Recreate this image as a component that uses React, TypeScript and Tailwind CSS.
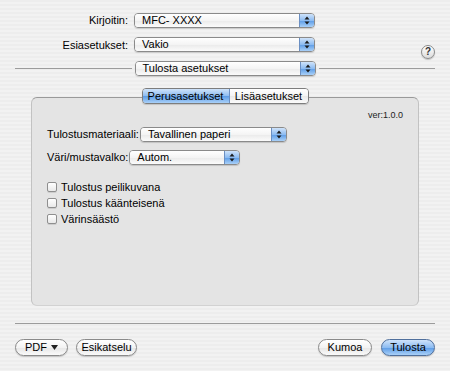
import type { ReactNode } from 'react'

const font = "font-['Liberation_Sans','DejaVu_Sans',sans-serif]"

function Arrows() {
  return (
    <svg width="6" height="9" viewBox="0 0 6 9" className="block">
      <path d="M3 0.5 L5.5 3.5 L0.5 3.5 Z" fill="#1a1a1a" />
      <path d="M3 8.5 L5.5 5.5 L0.5 5.5 Z" fill="#1a1a1a" />
    </svg>
  )
}

function Popup({ value, className }: { value: string; className: string }) {
  return (
    <div className={`flex h-[15px] items-stretch rounded-[4px] border border-[#8a8a8a] shadow-[0_1px_1px_rgba(0,0,0,0.15)] overflow-hidden ${className}`}>
      <div className="flex flex-1 items-center bg-[linear-gradient(#ffffff,#f4f4f4_50%,#eaeaea_51%,#fbfbfb)] pl-[7px] text-[11px] leading-none text-black">
        {value}
      </div>
      <div className="flex w-[15px] items-center justify-center border-l border-[#6b8fc2] bg-[linear-gradient(#cfe3fa,#8dbcf2_50%,#5b9be6_51%,#a9d0f8)]">
        <Arrows />
      </div>
    </div>
  )
}

function PushButton({ children, className, primary }: { children: ReactNode; className: string; primary?: boolean }) {
  return (
    <div
      className={`flex h-[17px] items-center justify-center rounded-full border text-[11px] leading-none text-black shadow-[0_1px_1px_rgba(0,0,0,0.18)] ${
        primary
          ? 'border-[#4f6f9c] bg-[linear-gradient(#cfe3fa,#8dbcf2_50%,#5b9be6_51%,#a9d0f8)]'
          : 'border-[#8a8a8a] bg-[linear-gradient(#ffffff,#f3f3f3_50%,#e6e6e6_51%,#fafafa)]'
      } ${className}`}
    >
      {children}
    </div>
  )
}

function Checkbox({ label }: { label: string }) {
  return (
    <div className="flex h-[16px] items-center gap-[4px]">
      <div className="h-[10px] w-[10px] rounded-[2px] border border-[#8f8f8f] bg-[linear-gradient(#ffffff,#e9e9e9)] shadow-[0_1px_0_rgba(0,0,0,0.1)]" />
      <span className="text-[11px] leading-none text-black">{label}</span>
    </div>
  )
}

export default function App() {
  return (
    <div
      className={`${font} flex h-[371px] w-[450px] flex-col overflow-hidden bg-[repeating-linear-gradient(180deg,#ededed_0px,#ededed_2px,#f2f2f2_2px,#f2f2f2_4px)] pt-[13px]`}
    >
      <div className="flex items-center">
        <span className="w-[128px] text-right text-[11px] leading-none text-black">Kirjoitin:</span>
        <Popup value="MFC- XXXX" className="ml-[6px] w-[181px]" />
      </div>

      <div className="mt-[9px] flex items-start">
        <span className="mt-[3px] w-[128px] text-right text-[11px] leading-none text-black">Esiasetukset:</span>
        <Popup value="Vakio" className="ml-[6px] w-[181px]" />
        <div className="mb-[-7px] ml-auto mr-[15px] mt-[8px] flex h-[14px] w-[14px] items-center justify-center rounded-full border border-[#8a8a8a] bg-[linear-gradient(#ffffff,#dcdcdc)] text-[10px] font-bold leading-none text-[#333] shadow-[0_1px_1px_rgba(0,0,0,0.2)]">
          ?
        </div>
      </div>

      <div className="mt-[9px] flex items-center px-[15px]">
        <div className="h-px flex-1 bg-[#9c9c9c]" />
        <Popup value="Tulosta asetukset" className="mx-[3px] w-[181px]" />
        <div className="h-px flex-1 bg-[#9c9c9c]" />
      </div>

      <div className="relative z-10 mb-[-7px] mt-[12px] flex justify-center">
        <div className="flex h-[16px] items-stretch overflow-hidden rounded-[4px] border border-[#7d7d7d] text-[11px] leading-none text-black shadow-[0_1px_1px_rgba(0,0,0,0.15)]">
          <div className="flex w-[87px] items-center justify-center border-r border-[#6b8fc2] bg-[linear-gradient(#cfe3fa,#8dbcf2_50%,#5b9be6_51%,#a9d0f8)]">
            Perusasetukset
          </div>
          <div className="flex w-[78px] items-center justify-center bg-[linear-gradient(#ffffff,#f4f4f4_50%,#e9e9e9_51%,#fbfbfb)]">
            Lisäasetukset
          </div>
        </div>
      </div>

      <div className="mx-[31px] flex h-[209px] flex-col rounded-[6px] border border-t-[#9a9a9a] border-x-[#c2c2c2] border-b-[#d2d2d2] bg-[#e4e4e4] px-[15px] pt-[13px]">
        <div className="h-[9px] text-right text-[9px] leading-[9px] text-[#222]">ver:1.0.0</div>

        <div className="mt-[7px] flex items-center gap-[1px]">
          <span className="text-[11px] leading-none text-black">Tulostusmateriaali:</span>
          <Popup value="Tavallinen paperi" className="w-[147px]" />
        </div>

        <div className="mt-[8px] flex items-center gap-[1px]">
          <span className="text-[11px] leading-none text-black">Väri/mustavalko:</span>
          <Popup value="Autom." className="w-[111px]" />
        </div>

        <div className="mt-[14px] flex flex-col">
          <Checkbox label="Tulostus peilikuvana" />
          <Checkbox label="Tulostus käänteisenä" />
          <Checkbox label="Värinsäästö" />
        </div>
      </div>

      <div className="mx-[15px] mt-[17px] h-px bg-[#9c9c9c]" />

      <div className="mt-[15px] flex items-center px-[15px]">
        <PushButton className="w-[53px] gap-[4px]">
          PDF
          <svg width="7" height="5" viewBox="0 0 7 5">
            <path d="M0 0 H7 L3.5 5 Z" fill="#222" />
          </svg>
        </PushButton>
        <PushButton className="ml-[8px] w-[61px]">Esikatselu</PushButton>
        <PushButton className="ml-auto w-[54px]">Kumoa</PushButton>
        <PushButton primary className="ml-[9px] w-[54px]">
          Tulosta
        </PushButton>
      </div>
    </div>
  )
}
